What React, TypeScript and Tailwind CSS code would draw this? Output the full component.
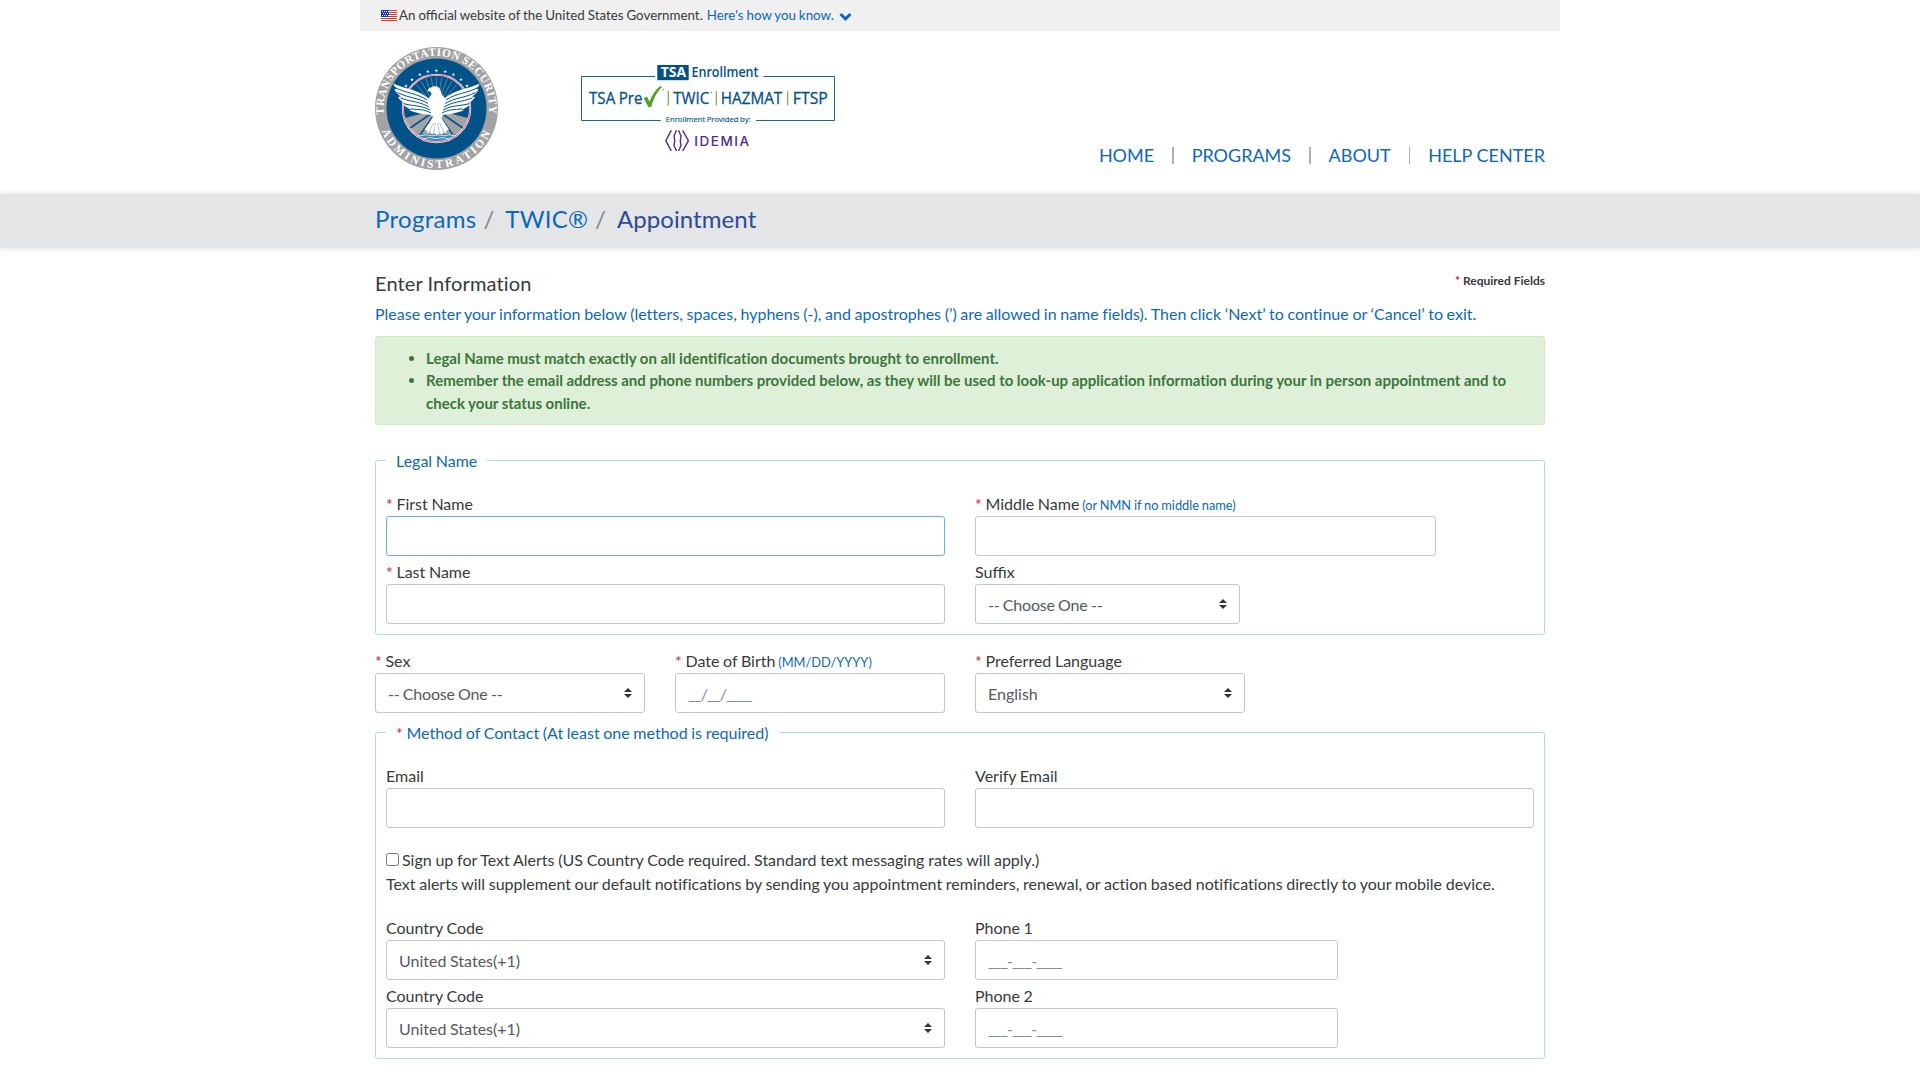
import React from "react";

const SEAL_STARS: [number, number][] = [
  [31, 39], [37, 32.6], [44.8, 27.4], [52.8, 24.4], [61.4, 23.4], [70.2, 24.4], [78.4, 27.4], [86, 32.4], [92, 38.8],
];
const WING_LINES =
  "M20 40.500C30 46 43 46.500 52 53M22.500 45.500C33 51 43 50.500 53 56.500M25.500 51C36 55 45 54.500 54 60M29.500 57C39 59 47 58.500 55 63M36 61.800C44 63 49 62 56 66";

function Seal() {
  const rays = [-80, -66, -53, -41, -30, -20, -10, 0, 10, 20, 30, 41, 53, 66, 80];
  return (
    <svg className="block h-[123px] w-[123px]" viewBox="0 0 123 123" role="img" aria-label="Transportation Security Administration">
      <defs>
        <path id="seal-top" d="M9.0 67.3 A52.8 52.8 0 1 1 114 67.3" />
        <path id="seal-bottom" d="M6.2 83 A59.3 59.3 0 0 0 116.8 83" />
        <clipPath id="seal-disc">
          <circle cx="61.5" cy="61.5" r="33" />
        </clipPath>
      </defs>
      <circle cx="61.5" cy="61.5" r="61.5" fill="#a3a3a5" />
      <circle cx="61.5" cy="61.5" r="50" fill="#02528a" />
      <g fontFamily="Liberation Serif, serif" fontWeight="700" fontSize="11.3" fill="#fff">
        <text>
          <textPath href="#seal-top" textLength="176" lengthAdjust="spacing">TRANSPORTATION SECURITY</textPath>
        </text>
        <text>
          <textPath href="#seal-bottom" startOffset="1" textLength="138" lengthAdjust="spacing">ADMINISTRATION</textPath>
        </text>
      </g>
      {SEAL_STARS.map(([x, y]) => (
        <path key={x} transform={`translate(${x} ${y})`} fill="#fff" d="M0-1.7.5-.5 1.7-.5.8.3 1.1 1.6 0 .9-1.1 1.6-.8.3-1.7-.5-.5-.5Z" />
      ))}
      <g clipPath="url(#seal-disc)">
        {rays.map((a) => (
          <path key={a} transform={`rotate(${a} 61.5 61)`} d="M61.5 61V30" stroke="#7f9dba" strokeWidth=".6" />
        ))}
        <path d="M26 72 61.5 63 97 72 97 87H26Z" fill="#a3a3a5" />
        <path d="M57 66 33 82.5M59 68 45 88M64 68 78 88M66 66 90 82.5" stroke="#02528a" strokeWidth="1.6" />
        <path d="M26 87H97V98H26Z" fill="#3f86b3" />
        <path d="M36 88.300q3-1 6 0t6 0 6 0 6 0 6 0 6 0 6 0 6 0M40 91.200q3-1 6 0t6 0 6 0 6 0 6 0 6 0 6 0" fill="none" stroke="#c4e0ee" strokeWidth="1" />
      </g>
      <circle cx="61.5" cy="61.5" r="33.7" fill="none" stroke="#fff" strokeWidth="2" />
      <circle cx="61.5" cy="61.5" r="33.7" fill="none" stroke="#dd4a60" strokeWidth=".9" />
      <g fill="#fff">
        <path id="wing" d="M18.500 36.500C27 41 38 42 46 46.5 51 49 53 51 55 53L58 68C48 67 41 66.500 34 63L37 62.500C33 61.500 30 60 28 57L31 56.500C27 55 24.500 53 23 50L26 49.500C22 47 20.500 44.500 19.500 42L22 42C20 40.500 18.800 38.500 18.500 36.500Z" />
        <use href="#wing" transform="matrix(-1 0 0 1 123 0)" />
        <path d="M52.700 44.500C52.500 42 54 40.800 56 40.500 58 39 62 38.800 64 40.800 66 42.600 65.800 45 66.700 47 68 49.500 71 51 71.500 55 72 62 69.500 66.500 66.500 70L68 75 66 80H57L55 75 58 70C54 66.500 51.500 62 52 55 52.300 51.500 55.500 49.500 56.500 47.200 56.800 45.500 55 43.800 52.700 44.500Z" />
        <path d="M58 70.500H66L74 82.500 71.500 83.500 71 86 68.500 85 67 87.500 64.500 86 62 88 59.500 86 57 87.500 55 85 52.500 86 52 83.500 49.500 82.500Z" />
      </g>
      <g fill="none" stroke="#02528a" strokeWidth="1">
        <path d={WING_LINES} />
        <path transform="matrix(-1 0 0 1 123 0)" d={WING_LINES} />
      </g>
      <path d="M58.500 76 54 85M60.500 76 58.500 87M62.500 76 64.500 87M64.500 76 69 85" stroke="#8a9aac" strokeWidth=".6" />
    </svg>
  );
}

function EnrollmentLogo() {
  return (
    <svg className="block h-[105px] w-[280px]" viewBox="0 0 280 105" role="img" aria-label="TSA Enrollment">
      <path d="M85 21.500H11.500V65.500H90.700M193.300 21.500H264.500V65.500H186" fill="none" stroke="#1f6592" strokeWidth="1" />
      <rect x="87.300" y="10" width="31.400" height="15.200" fill="#02528a" />
      <g fontFamily="Open Sans, sans-serif">
        <text x="90.700" y="22.400" fontSize="13.500" fontWeight="700" fill="#fff" textLength="25.300" lengthAdjust="spacingAndGlyphs">TSA</text>
        <text x="121.500" y="22.300" fontSize="13.800" fontWeight="600" fill="#02528a" textLength="67" lengthAdjust="spacingAndGlyphs">Enrollment</text>
        <g fontSize="15.600" fill="#02528a" stroke="#02528a" strokeWidth=".3">
          <text x="19" y="48.800" textLength="53.500" lengthAdjust="spacingAndGlyphs">TSA Pre</text>
          <text x="103.300" y="48.800" textLength="36" lengthAdjust="spacingAndGlyphs">TWIC</text>
          <text x="150.800" y="48.800" textLength="61.400" lengthAdjust="spacingAndGlyphs">HAZMAT</text>
          <text x="222.800" y="48.800" textLength="35" lengthAdjust="spacingAndGlyphs">FTSP</text>
        </g>
        <text x="95.800" y="67" fontSize="7.800" fill="#02528a" stroke="#02528a" strokeWidth=".15" textLength="84.700" lengthAdjust="spacingAndGlyphs">Enrollment Provided by:</text>
      </g>
      <path d="M73.800 43.200 77 41.500 79.600 46.400C82 40 85.500 34.500 90 31.200L92.300 31.800C87.500 36.500 83.500 43 81.300 52H78.300Z" fill="#5a9e2f" />
      <path d="M98.300 36V50.500M146.300 36V50.500M217.700 36V50.500" stroke="#6ba543" strokeWidth="1.100" />
      <circle cx="93.400" cy="34.500" r=".8" fill="#4d86ac" />
      <circle cx="141.500" cy="37.500" r=".8" fill="#4d86ac" />
      <g fill="none" stroke="#4b2f91" strokeWidth="1.400">
        <path d="M101.300 75.300 95.800 85.700 101.300 96M112.700 75.300 118.400 85.700 112.700 96" />
        <path d="M106.500 75.300 104 81C105 84.500 105 87 104 90.500L106.500 96M108.500 75.300 111 81C110 84.500 110 87 111 90.500L108.500 96" />
      </g>
      <text x="124.200" y="91.300" fontFamily="Inter, sans-serif" fontSize="13.500" fontWeight="500" fill="#4b2f91" textLength="55" lengthAdjust="spacing">IDEMIA</text>
    </svg>
  );
}

function Flag() {
  return (
    <svg className="mr-[2px] block h-[11px] w-4" viewBox="0 0 16 11" aria-hidden="true">
      <path fill="#fff" d="M0 0h16v11H0z" />
      <path d="M0 .5h16M0 2.500h16M0 4.500h16M0 6.500h16M0 8.500h16M0 10.500h16" stroke="#db3e1f" />
      <path fill="#1e33b1" d="M0 0h8v7H0z" />
      <path d="M1 1.500h7M2 3.500h6M1 5.500h7" stroke="#fff" strokeDasharray="1 1" />
    </svg>
  );
}

function Star() {
  return <span className="text-[#dc143c]">* </span>;
}

function Label({ text, required, hint }: { text: string; required?: boolean; hint?: string }) {
  return (
    <label className="block h-6 whitespace-nowrap">
      {required && <Star />}
      {text}
      {hint && <span className="text-[12.8px] text-[#0d68b9]"> {hint}</span>}
    </label>
  );
}

function TextField({ placeholder, focused }: { placeholder?: string; focused?: boolean }) {
  return (
    <input
      type="text"
      placeholder={placeholder}
      className={
        focused
          ? "block h-10 w-full rounded-[3px] border border-[#66afe9] bg-white px-3 outline-none"
          : "block h-10 w-full rounded-[3px] border border-[#c5c6c8] bg-white px-3 tracking-[-0.98px] outline-none placeholder:text-[#868b90]"
      }
    />
  );
}

function SelectField({ value, dashed }: { value: string; dashed?: boolean }) {
  return (
    <div className="flex h-10 w-full items-center justify-between rounded-[3px] border border-[#c5c6c8] bg-white px-3 text-[#55595c]">
      <span className={dashed ? "pt-0.5 tracking-[-0.22px]" : "pt-0.5"}>{value}</span>
      <svg className="h-2.5 w-2" viewBox="0 0 4 5" aria-hidden="true">
        <path fill="#333" d="M2 0L0 2h4zm0 5L0 3h4z" />
      </svg>
    </div>
  );
}

export default function App() {
  const nav = ["HOME", "PROGRAMS", "ABOUT", "HELP CENTER"];
  return (
    <div className="h-[1080px] w-full overflow-hidden bg-white font-['Lato',sans-serif] text-base leading-6 text-[#373a3c] [word-spacing:-0.45px]">
      <div className="mx-auto flex h-[31px] w-[1200px] items-center bg-[#f0f0f0] pb-px pl-[21px] text-[13.33px]">
        <div className="pt-px"><Flag /></div>
        <span>An official website of the United States Government.</span>
        <a className="ml-1 text-[#0d68b9]">Here's how you know.</a>
        <svg className="mt-0.5 ml-[5px] h-[13px] w-[13px]" viewBox="0 0 13 13" aria-hidden="true">
          <path d="M1.500 4 6.500 8.800 11.500 4" fill="none" stroke="#0d68b9" strokeWidth="3" />
        </svg>
      </div>

      <header className="mx-auto flex h-[163px] w-[1200px] px-[15px]">
        <div className="pt-4"><Seal /></div>
        <div className="ml-[72px] pt-6"><EnrollmentLogo /></div>
        <nav className="mt-[112px] ml-auto flex h-6 items-center text-[18px] text-[#0d68b9] [word-spacing:0]">
          {nav.map((item, i) => (
            <React.Fragment key={item}>
              {i > 0 && <span className="mx-[18px] h-[17px] w-[1.5px] bg-[#b0b0b0]" />}
              <a>{item}</a>
            </React.Fragment>
          ))}
        </nav>
      </header>

      <div className="h-[54px] bg-[#e4e5e7] shadow-[0_0_6px_rgba(0,0,0,0.16)]">
        <div className="mx-auto flex h-[50px] w-[1200px] items-center px-[15px] text-2xl text-[#0d68b9]">
          <a className="tracking-[0.3px]">Programs</a>
          <span className="mr-[11px] ml-[7px] text-[#818a91]">/</span>
          <a className="tracking-[0.2px]">TWIC®</a>
          <span className="mr-[11px] ml-[7px] text-[#818a91]">/</span>
          <span className="tracking-[0.08px] text-[#2e4a94]">Appointment</span>
        </div>
      </div>

      <main className="mx-auto w-[1200px] px-[15px] pt-[22px]">
        <div className="flex h-[32px] justify-between">
          <h1 className="text-xl leading-[26px] tracking-[0.15px]">Enter Information</h1>
          <div className="text-xs leading-[21px] font-bold [word-spacing:0]"><Star />Required Fields</div>
        </div>
        <p className="[font-variant-ligatures:none]">
          <span className="text-[#0d68b9]">Please enter your information below (letters, spaces, hyphens (-), and apostrophes (’) are allowed in name fields). Then click ‘Next’ to continue or ‘Cancel’ to exit.</span>
        </p>
        <div className="mt-[10px] h-[89px] rounded-[3px] border border-[#d0e9c6] bg-[#dff0d8] pt-[9.6px] pr-5 pl-[50px] text-[15px] leading-[22.5px] font-bold text-[#3c763d] [font-variant-ligatures:none] [word-spacing:-0.1px]">
          <ul className="list-disc">
            <li>Legal Name must match exactly on all identification documents brought to enrollment.</li>
            <li>Remember the email address and phone numbers provided below, as they will be used to look-up application information during your in person appointment and to check your status online.</li>
          </ul>
        </div>

        <fieldset className="mt-6 h-[186px] rounded-[3px] border border-[#b0d7fb] px-[10px]">
          <legend className="h-[23px] px-[10px] text-[#0d68b9]">Legal Name</legend>
          <div className="grid grid-cols-[559px_559px] gap-x-[30px] gap-y-1 pt-5">
            <div><Label required text="First Name" /><TextField focused /></div>
            <div className="w-[461px]"><Label required text="Middle Name" hint="(or NMN if no middle name)" /><TextField /></div>
            <div><Label required text="Last Name" /><TextField /></div>
            <div className="w-[265px]"><Label text="Suffix" /><SelectField dashed value="-- Choose One --" /></div>
          </div>
        </fieldset>

        <div className="mt-[14px] flex gap-[30px]">
          <div className="w-[270px]"><Label required text="Sex" /><SelectField dashed value="-- Choose One --" /></div>
          <div className="w-[270px]"><Label required text="Date of Birth" hint="(MM/DD/YYYY)" /><TextField placeholder="__/__/____" /></div>
          <div className="w-[270px]"><Label required text="Preferred Language" /><SelectField value="English" /></div>
        </div>

        <fieldset className="mt-2 h-[338px] rounded-[3px] border border-[#b0d7fb] px-[10px]">
          <legend className="h-[23px] px-[10px] text-[#0d68b9]"><Star />Method of Contact (At least one method is required)</legend>
          <div className="grid grid-cols-[559px_559px] gap-x-[30px] pt-5">
            <div><Label text="Email" /><TextField /></div>
            <div><Label text="Verify Email" /><TextField /></div>
          </div>
          <label className="mt-5 flex h-6 items-center [word-spacing:-0.35px]">
            <input type="checkbox" className="mr-[3px] mb-px h-[13px] w-[13px]" />
            Sign up for Text Alerts (US Country Code required. Standard text messaging rates will apply.)
          </label>
          <p className="[font-variant-ligatures:none]">Text alerts will supplement our default notifications by sending you appointment reminders, renewal, or action based notifications directly to your mobile device.</p>
          <div className="mt-5 grid grid-cols-[559px_363px] gap-x-[30px] gap-y-1">
            <div><Label text="Country Code" /><SelectField value="United States(+1)" /></div>
            <div><Label text="Phone 1" /><TextField placeholder="___-___-____" /></div>
            <div><Label text="Country Code" /><SelectField value="United States(+1)" /></div>
            <div><Label text="Phone 2" /><TextField placeholder="___-___-____" /></div>
          </div>
        </fieldset>
      </main>
    </div>
  );
}
